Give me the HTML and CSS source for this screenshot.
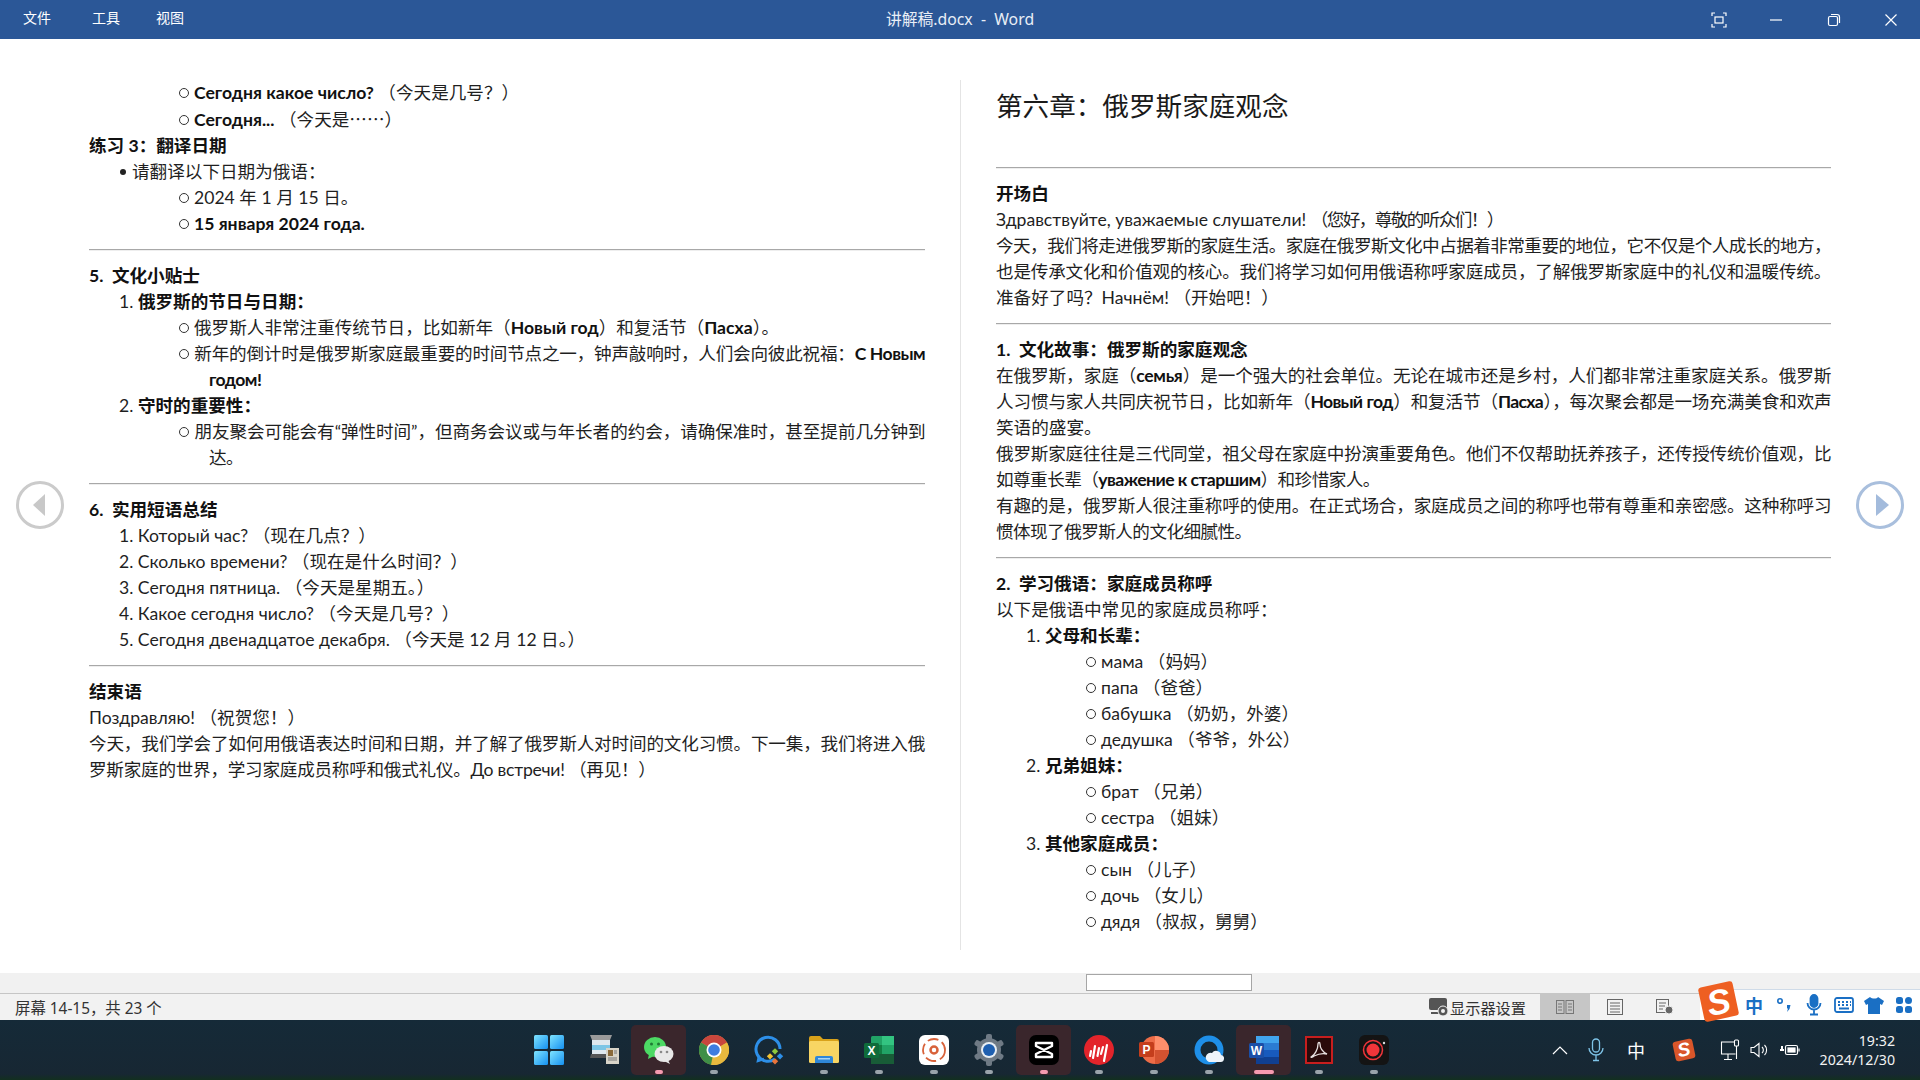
FILE: index.html
```html
<!DOCTYPE html>
<html lang="zh-CN">
<head>
<meta charset="utf-8">
<title>讲解稿.docx - Word</title>
<link rel="stylesheet" href="styles.css">
</head>
<body>
<div class="app">
  <header class="titlebar">
    <nav class="menu"><span class="m1">文件</span><span class="m2">工具</span><span class="m3">视图</span></nav>
    <div class="doc-title">讲解稿.docx&nbsp; - &nbsp;Word</div>
    <div class="winbtns">
      <span class="winbtn"><svg width="16" height="16" viewBox="0 0 16 16" fill="none" stroke="#fff" stroke-width="1.2"><path d="M1 4V1h3M12 1h3v3M15 12v3h-3M4 15H1v-3"/><rect x="4" y="5" width="8" height="6"/></svg></span>
      <span class="winbtn"><svg width="14" height="14" viewBox="0 0 14 14" stroke="#fff" stroke-width="1.2"><path d="M1 7h12"/></svg></span>
      <span class="winbtn"><svg width="14" height="14" viewBox="0 0 14 14" fill="none" stroke="#fff" stroke-width="1.2"><rect x="1.5" y="3.5" width="9" height="9" rx="1.5"/><path d="M4 1.5h6a2.5 2.5 0 0 1 2.500 2.500v6"/></svg></span>
      <span class="winbtn"><svg width="14" height="14" viewBox="0 0 14 14" stroke="#fff" stroke-width="1.2"><path d="M1.500 1.500l11 11M12.500 1.500l-11 11"/></svg></span>
    </div>
  </header>

  <main class="doc">
    <section class="page page-left">
      <p class="l2"><b>Сегодня какое число?</b> （今天是几号？）</p>
      <p class="l2"><b>Сегодня...</b> （今天是<span class="cjk">……</span>）</p>
      <p class="h">练习 3：翻译日期</p>
      <p class="l1 dot">请翻译以下日期为俄语：</p>
      <p class="l2">2024 年 1 月 15 日。</p>
      <p class="l2"><b>15 января 2024 года.</b></p>
      <hr class="rule">
      <p class="h">5. &nbsp;文化小贴士</p>
      <p class="l1">1. <b>俄罗斯的节日与日期：</b></p>
      <p class="l2">俄罗斯人非常注重传统节日，比如新年（<b>Новый год</b>）和复活节（<b>Пасха</b>）。</p>
      <p class="l2 fit">新年的倒计时是俄罗斯家庭最重要的时间节点之一，钟声敲响时，人们会向彼此祝福：<b>С Новым годом!</b></p>
      <p class="l1">2. <b>守时的重要性：</b></p>
      <p class="l2 fit">朋友聚会可能会有“弹性时间”，但商务会议或与年长者的约会，请确保准时，甚至提前几分钟到达。</p>
      <hr class="rule">
      <p class="h">6. &nbsp;实用短语总结</p>
      <p class="l1">1. Который час? （现在几点？）</p>
      <p class="l1">2. Сколько времени? （现在是什么时间？）</p>
      <p class="l1">3. Сегодня пятница. （今天是星期五。）</p>
      <p class="l1">4. Какое сегодня число? （今天是几号？）</p>
      <p class="l1">5. Сегодня двенадцатое декабря. （今天是 12 月 12 日。）</p>
      <hr class="rule">
      <p class="h">结束语</p>
      <p>Поздравляю! （祝贺您！）</p>
      <p class="fit-b">今天，我们学会了如何用俄语表达时间和日期，并了解了俄罗斯人对时间的文化习惯。下一集，我们将进入俄罗斯家庭的世界，学习家庭成员称呼和俄式礼仪。До встречи! （再见！）</p>
    </section>

    <section class="page page-right">
      <h1 class="chapter">第六章：俄罗斯家庭观念</h1>
      <hr class="rule">
      <p class="h">开场白</p>
      <p>Здравствуйте, уважаемые слушатели! <span class="squeeze">（您好，尊敬的听众们！）</span></p>
      <p><span class="ln ln-a">今天，我们将走进俄罗斯的家庭生活。家庭在俄罗斯文化中占据着非常重要的地位，它不仅是个人成长的地方，</span><span class="ln ln-b">也是传承文化和价值观的核心。我们将学习如何用俄语称呼家庭成员，了解俄罗斯家庭中的礼仪和温暖传统。</span>准备好了吗？Начнём! （开始吧！）</p>
      <hr class="rule">
      <p class="h">1. &nbsp;文化故事：俄罗斯的家庭观念</p>
      <p><span class="ln ln-b">在俄罗斯，家庭（<b>семья</b>）是一个强大的社会单位。无论在城市还是乡村，人们都非常注重家庭关系。俄罗斯</span><span class="ln ln-a">人习惯与家人共同庆祝节日，比如新年（<b>Новый год</b>）和复活节（<b>Пасха</b>），每次聚会都是一场充满美食和欢声</span>笑语的盛宴。</p>
      <p class="fit">俄罗斯家庭往往是三代同堂，祖父母在家庭中扮演重要角色。他们不仅帮助抚养孩子，还传授传统价值观，比如尊重长辈（<b>уважение к старшим</b>）和珍惜家人。</p>
      <p class="fit">有趣的是，俄罗斯人很注重称呼的使用。在正式场合，家庭成员之间的称呼也带有尊重和亲密感。这种称呼习惯体现了俄罗斯人的文化细腻性。</p>
      <hr class="rule">
      <p class="h">2. &nbsp;学习俄语：家庭成员称呼</p>
      <p>以下是俄语中常见的家庭成员称呼：</p>
      <p class="l1">1. <b>父母和长辈：</b></p>
      <p class="l2">мама （妈妈）</p>
      <p class="l2">папа （爸爸）</p>
      <p class="l2">бабушка （奶奶，外婆）</p>
      <p class="l2">дедушка （爷爷，外公）</p>
      <p class="l1">2. <b>兄弟姐妹：</b></p>
      <p class="l2">брат （兄弟）</p>
      <p class="l2">сестра （姐妹）</p>
      <p class="l1">3. <b>其他家庭成员：</b></p>
      <p class="l2">сын （儿子）</p>
      <p class="l2">дочь （女儿）</p>
      <p class="l2">дядя （叔叔，舅舅）</p>
    </section>

    <button class="nav nav-prev" aria-label="上一屏"></button>
    <button class="nav nav-next" aria-label="下一屏"></button>
  </main>

  <div class="band"><div class="thumb"></div></div>

  <footer class="status">
    <span class="status-text">屏幕 14-15，共 23 个</span>
    <div class="status-right">
      <span class="display-set">
        <svg width="20" height="20" viewBox="0 0 20 20"><rect x="0" y="1" width="18" height="12" rx="2" fill="#555"/><path d="M2 16h8" stroke="#555" stroke-width="2"/><circle cx="14" cy="14" r="5" fill="#555" stroke="#f1f1f1"/><circle cx="14" cy="14" r="2" fill="#f1f1f1"/></svg>
        显示器设置
      </span>
      <span class="view view-on"><svg width="20" height="16" viewBox="0 0 20 16" fill="none" stroke="#777"><rect x="1.500" y="1.500" width="7.500" height="13"/><rect x="11" y="1.500" width="7.500" height="13"/><path d="M3 5h4M3 8h4M3 11h4M13 5h4M13 8h4M13 11h4"/></svg></span>
      <span class="view"><svg width="20" height="18" viewBox="0 0 20 18" fill="none" stroke="#666"><rect x="2.500" y="1.500" width="15" height="15"/><path d="M5 5h10M5 8h10M5 11h10M5 14h10"/></svg></span>
      <span class="view"><svg width="20" height="18" viewBox="0 0 20 18" fill="none" stroke="#666"><rect x="1.500" y="1.500" width="12" height="13"/><path d="M4 5h7M4 8h6M4 11h4"/><circle cx="14" cy="12" r="4" fill="#666" stroke="#f1f1f1"/></svg></span>
    </div>
  </footer>

  <div class="ime">
    <span class="ime-logo"><span class="ime-s">S</span></span>
    <span class="ime-item ime-zh">中</span>
    <span class="ime-item"><svg width="16" height="16" viewBox="0 0 16 16" fill="#1a6fc4"><circle cx="4" cy="4" r="2.200" fill="none" stroke="#1a6fc4" stroke-width="1.600"/><path d="M11 8h3.500l-1 4-2.500 3 1-3.500H11z"/></svg></span>
    <span class="ime-item"><svg width="16" height="22" viewBox="0 0 16 22" fill="none" stroke="#1a6fc4" stroke-width="1.800"><rect x="4.500" y="1" width="7" height="12" rx="3.500" fill="#1a6fc4"/><path d="M1.500 9a6.500 6.500 0 0 0 13 0M8 15.500V20M4 20.500h8"/></svg></span>
    <span class="ime-item"><svg width="20" height="16" viewBox="0 0 20 16" fill="none" stroke="#1a6fc4" stroke-width="1.800"><rect x="1" y="1" width="18" height="14" rx="2"/><path d="M4 5h2M8 5h2M12 5h2M16 5h1M4 8h2M8 8h2M12 8h2M16 8h1M5 11.500h10"/></svg></span>
    <span class="ime-item"><svg width="20" height="18" viewBox="0 0 20 18" fill="#1a6fc4"><path d="M6 1L0 5l2 4 2-1v10h12V8l2 1 2-4-6-4c-1 2-6 2-8 0z"/></svg></span>
    <span class="ime-item"><svg width="16" height="16" viewBox="0 0 16 16" fill="#1a6fc4"><rect x="0" y="0" width="7" height="7" rx="2.500"/><rect x="9" y="0" width="7" height="7" rx="3.500"/><rect x="0" y="9" width="7" height="7" rx="2.500"/><rect x="9" y="9" width="7" height="7" rx="2.500"/></svg></span>
  </div>

  <div class="taskbar">
    <div class="apps">
      <span class="app-i"><svg width="30" height="30" viewBox="0 0 30 30"><defs><linearGradient id="w" x1="0" y1="0" x2="1" y2="1"><stop offset="0" stop-color="#7fe4ff"/><stop offset="1" stop-color="#1590f0"/></linearGradient></defs><rect width="14" height="14" rx="1.500" fill="url(#w)"/><rect x="16" width="14" height="14" rx="1.500" fill="url(#w)"/><rect y="16" width="14" height="14" rx="1.500" fill="url(#w)"/><rect x="16" y="16" width="14" height="14" rx="1.500" fill="url(#w)"/></svg></span>
      <span class="app-i"><svg width="30" height="30" viewBox="0 0 30 30"><path d="M1 0h22l-2 5H3z" fill="#9a9a9a"/><rect x="3" y="5" width="18" height="14" fill="#dfe8ee"/><rect x="3" y="10" width="18" height="5" fill="#7cc5e5"/><path d="M2 19h20l1 4H1z" fill="#555"/><rect x="17" y="13" width="13" height="16" fill="#d8d4c8"/><rect x="19" y="15" width="5" height="6" fill="#8a6a3a"/><path d="M19 23h9M19 25h9M25 16h3M25 18h3" stroke="#777"/></svg></span>
      <span class="app-i active run-on"><svg width="32" height="28" viewBox="0 0 32 28"><ellipse cx="12" cy="11" rx="11" ry="10" fill="#4cd964"/><path d="M6 18l-1 5 6-3z" fill="#4cd964"/><circle cx="8.500" cy="8" r="1.500" fill="#1e7a34"/><circle cx="15.500" cy="8" r="1.500" fill="#1e7a34"/><ellipse cx="21" cy="18" rx="9.500" ry="8" fill="#e8e8e8"/><path d="M25 24l2 4-6-3z" fill="#e8e8e8"/><circle cx="18" cy="16" r="1.300" fill="#888"/><circle cx="24" cy="16" r="1.300" fill="#888"/></svg></span>
      <span class="app-i run"><svg width="30" height="30" viewBox="0 0 30 30"><circle cx="15" cy="15" r="15" fill="#d9a441"/><path d="M15 15L2 7.500A15 15 0 0 1 28 7.500z" fill="#c9463d"/><path d="M15 15L2 7.500A15 15 0 0 0 15 30z" fill="#3f8f47"/><path d="M15 15L28 7.500A15 15 0 0 1 12 29.700z" fill="#e8b93e"/><circle cx="15" cy="15" r="7.500" fill="#fff"/><circle cx="15" cy="15" r="5.800" fill="#3f7de0"/></svg></span>
      <span class="app-i"><svg width="32" height="30" viewBox="0 0 32 30" fill="none"><path d="M22 24a12 12 0 1 1 5-10" stroke="#2d8fe8" stroke-width="3"/><path d="M6 21l-1 5 6-2" stroke="#2d8fe8" stroke-width="2.500"/><rect x="20" y="14" width="4.500" height="4.500" fill="#8ec83f" transform="rotate(45 22 16)"/><rect x="25" y="19" width="4.500" height="4.500" fill="#2d8fe8" transform="rotate(45 27 21)"/><rect x="15" y="19" width="4.500" height="4.500" fill="#f2c230" transform="rotate(45 17 21)"/><rect x="20" y="24" width="4.500" height="4.500" fill="#e8743b" transform="rotate(45 22 26)"/></svg></span>
      <span class="app-i run"><svg width="30" height="28" viewBox="0 0 30 28"><path d="M0 2a2 2 0 0 1 2-2h9l3 3h14a2 2 0 0 1 2 2v3H0z" fill="#d9a21a"/><rect y="5" width="30" height="22" rx="1.500" fill="#f8d563"/><path d="M6 27v-5a2 2 0 0 1 2-2h14a2 2 0 0 1 2 2v5z" fill="#2f87d8"/><rect x="9" y="22" width="12" height="1.500" fill="#a9d5f5"/></svg></span>
      <span class="app-i run"><svg width="30" height="28" viewBox="0 0 30 28"><rect x="7" width="23" height="28" rx="1.500" fill="#21a366"/><rect x="18" width="12" height="9" fill="#33c481"/><rect x="18" y="9" width="12" height="9" fill="#21a366"/><rect x="7" y="9" width="11" height="9" fill="#107c41"/><rect x="7" y="18" width="23" height="10" fill="#185c37"/><rect y="7" width="15" height="15" rx="1.500" fill="#0f6b3a"/><text class="tile-l" x="7.500" y="19" text-anchor="middle">X</text></svg></span>
      <span class="app-i run"><svg width="30" height="30" viewBox="0 0 30 30" fill="none"><rect width="30" height="30" rx="6" fill="#fff"/><circle cx="15" cy="15" r="3.500" stroke="#d8623a" stroke-width="2.500"/><circle cx="15" cy="15" r="11" stroke="#d8623a" stroke-width="1.800" stroke-dasharray="11 4"/></svg></span>
      <span class="app-i run"><svg width="32" height="32" viewBox="0 0 32 32"><g fill="#6f7a85"><circle cx="16" cy="16" r="12"/><rect x="13" y="0" width="6" height="32" rx="2"/><rect x="13" y="0" width="6" height="32" rx="2" transform="rotate(60 16 16)"/><rect x="13" y="0" width="6" height="32" rx="2" transform="rotate(120 16 16)"/></g><circle cx="16" cy="16" r="8" fill="#e8eef4"/><circle cx="16" cy="16" r="6" fill="#1e5fb0"/></svg></span>
      <span class="app-i active run-on"><svg width="30" height="30" viewBox="0 0 30 30" fill="none"><rect width="30" height="30" rx="7" fill="#000"/><path d="M7 8h16v3L7 19v3h16v-3L7 11z" stroke="#fff" stroke-width="2.400" stroke-linejoin="round"/></svg></span>
      <span class="app-i run"><svg width="30" height="30" viewBox="0 0 30 30" fill="none"><circle cx="15" cy="15" r="15" fill="#e3242b"/><path d="M7 16l-1 5M11 11l-2 12M15 13l-1.500 8M19 12l-2 7M23 10l-3 16" stroke="#fff" stroke-width="2.200" stroke-linecap="round"/></svg></span>
      <span class="app-i run"><svg width="30" height="30" viewBox="0 0 30 30"><circle cx="16" cy="15" r="14" fill="#ed6c47"/><path d="M16 1a14 14 0 0 1 14 14H16z" fill="#ff8f6b"/><path d="M16 15h14a14 14 0 0 1-14 14z" fill="#d35230"/><rect y="7" width="15" height="15" rx="1.500" fill="#c43e1c"/><text class="tile-l" x="7.500" y="19" text-anchor="middle">P</text></svg></span>
      <span class="app-i run"><svg width="30" height="30" viewBox="0 0 30 30" fill="none"><circle cx="15" cy="15" r="11.500" stroke="#1e8fe8" stroke-width="6"/><path d="M15 27h11a3.500 3.500 0 0 0 1-7 5 5 0 0 0-9-2 4.500 4.500 0 0 0-3 9z" fill="#eef4fa"/></svg></span>
      <span class="app-i active run-wide"><svg width="30" height="28" viewBox="0 0 30 28"><rect x="7" width="23" height="28" rx="1.500" fill="#2b7cd3"/><rect x="7" width="23" height="7" fill="#41a5ee"/><rect x="7" y="14" width="23" height="7" fill="#185abd"/><rect x="7" y="21" width="23" height="7" fill="#103f91"/><rect y="7" width="15" height="15" rx="1.500" fill="#1a4fa8"/><text class="tile-l" x="7.500" y="19" text-anchor="middle">W</text></svg></span>
      <span class="app-i run"><svg width="28" height="28" viewBox="0 0 28 28" fill="none"><rect x="1" y="1" width="26" height="26" fill="#2a0a0a" stroke="#c81e1e" stroke-width="2"/><path d="M6 21c4-2 7-8 7-13 0-2 2-2 2 0 0 4 3 8 7 10-4-1-9 0-13 2-1 1-3 2-3 1z" stroke="#e8e0e0" stroke-width="1.300"/></svg></span>
      <span class="app-i run"><svg width="30" height="30" viewBox="0 0 30 30" fill="none"><rect width="30" height="30" rx="6" fill="#141414"/><circle cx="14" cy="15" r="6.500" fill="#f0353a"/><circle cx="14" cy="15" r="9.500" stroke="#f0353a" stroke-width="1.500"/><circle cx="25" cy="8" r="1.200" fill="#ddd"/></svg></span>
    </div>

    <div class="tray">
      <span class="tr tr-up"><svg width="16" height="10" viewBox="0 0 16 10" fill="none" stroke="#fff" stroke-width="1.200"><path d="M1 9l7-7 7 7"/></svg></span>
      <span class="tr tr-mic"><svg width="16" height="24" viewBox="0 0 16 24" fill="none" stroke="#7fc4e8" stroke-width="1.300"><rect x="4.500" y="1" width="7" height="13" rx="3.500"/><path d="M1 10a7 7 0 0 0 14 0M8 17v5M5 22.500h6"/></svg></span>
      <span class="tr tr-zh">中</span>
      <span class="tr tr-s"><span class="s-small">S</span></span>
      <span class="tr tr-mon"><svg width="20" height="22" viewBox="0 0 20 22" fill="none" stroke="#fff" stroke-width="1.100"><path d="M14 3H1.500v12h14"/><path d="M8 15v5M4 20.500h8"/><rect x="14.500" y="1" width="4" height="6" rx="1"/><path d="M16.500 7v13"/></svg></span>
      <span class="tr tr-vol"><svg width="20" height="16" viewBox="0 0 20 16" fill="none" stroke="#fff" stroke-width="1.100"><path d="M1 5.500h3L9 1.500v13L4 10.500H1z"/><path d="M12 5a4 4 0 0 1 0 6M14.500 3a7 7 0 0 1 0 10"/></svg></span>
      <span class="tr tr-bat"><svg width="20" height="16" viewBox="0 0 20 16" fill="none" stroke="#fff" stroke-width="1.200"><rect x="5.500" y="3.500" width="12" height="9" rx="1.500"/><path d="M19 6.500v3"/><rect x="8" y="6" width="7" height="4" fill="#fff"/><path d="M0 8h4M2 4v4" stroke-width="2"/></svg></span>
      <div class="clock"><div>19:32</div><div>2024/12/30</div></div>
    </div>
  </div>
</div>
</body>
</html>
```

FILE: styles.css
```css
* { box-sizing: border-box; }
html, body { margin: 0; padding: 0; }
body {
  width: 1920px;
  height: 1080px;
  overflow: hidden;
  font-family: "Noto Sans", "Noto Sans CJK SC", sans-serif;
  color: #222;
}
.app { position: relative; display: flex; flex-direction: column; height: 1080px; background: #fff; }

/* title bar */
.titlebar {
  position: relative;
  height: 39px;
  flex: none;
  background: #2b5797;
  color: #fff;
  font-size: 14px;
  display: flex;
  align-items: center;
}
.menu { display: flex; padding-left: 23px; margin-top: -6px; }
.m1 { width: 69px; }
.m2 { width: 64px; }
.m3 { width: 40px; }
.doc-title {
  position: absolute;
  left: 0;
  right: 0;
  top: 8px;
  text-align: center;
  font-size: 15.800px;
  line-height: 22px;
  color: #e8eef6;
}
.winbtns { margin-left: auto; display: flex; }
.winbtn { width: 57.500px; height: 39px; display: flex; align-items: center; justify-content: center; }

/* document */
.doc { position: relative; flex: 1; display: flex; padding-top: 41px; }
.page {
  width: 960px;
  height: 870px;
  font-family: Lato, "Noto Sans CJK SC", sans-serif;
  font-size: 17.6px;
  line-height: 26px;
  color: #1f1f1f;
}
.page-left { padding: 0 35px 0 89px; }
.page-right { padding: 0 89px 0 35px; border-left: 1px solid #e4e4e4; }
.page p { margin: 0; text-align: justify; }
.page b { font-weight: 700; color: #111; }
.page .fit { letter-spacing: -0.55px; }
.page .fit-b { letter-spacing: -0.25px; }
.ln { display: block; text-align-last: justify; }
.ln-a { letter-spacing: -0.7px; }
.ln-b { letter-spacing: -0.3px; }
.squeeze { letter-spacing: -1.600px; }
.cjk { font-family: "Noto Sans CJK SC", sans-serif; }
.h { font-weight: 700; color: #111; }
.chapter { margin: 0 0 34px; height: 53px; font-size: 26.600px; line-height: 53px; font-weight: 400; color: #1a1a1a; }
.rule { height: 2px; margin: 12px 0; border: 0; border-top: 1px solid #a8a8a8; border-bottom: 1px solid #eee; }
.l1 { padding-left: 30px; }
.l1.dot::before { content: ""; display: inline-block; width: 6px; height: 6px; border-radius: 50%; background: #222; margin: 0 6px 3px 1px; }
.l2 { padding-left: 120px; text-indent: -30px; }
.l2::before { content: ""; display: inline-block; width: 8px; height: 8px; border: 1px solid #333; border-radius: 50%; margin-right: 5px; margin-bottom: 1px; }

.nav { position: absolute; top: 442px; width: 48px; height: 48px; padding: 0; border-radius: 50%; background: #fff; border: 3px solid #cbcbcb; }
.nav::after { content: ""; position: absolute; top: 10px; border: 11px solid transparent; }
.nav-prev { left: 16px; }
.nav-prev::after { border-left-width: 0; border-right: 12px solid #c8c8c8; left: 14px; }
.nav-next { left: 1856px; border-color: #a9bfdd; }
.nav-next::after { left: 17px; border-right-width: 0; border-left: 13px solid #a3bbdc; }

/* band + status */
.band { height: 20px; flex: none; background: #f1f1f1; padding: 1px 0 0 1086px; }
.thumb { width: 166px; height: 17px; background: #fff; border: 1px solid #a6a6a6; }
.status {
  height: 27px;
  flex: none;
  background: #f2f2f2;
  border-top: 1px solid #c6c6c6;
  display: flex;
  align-items: center;
  font-size: 15.400px;
  color: #333;
}
.status-text { padding-left: 15px; }
.status-right { margin-left: auto; display: flex; align-items: center; height: 100%; padding-right: 230px; }
.display-set { display: flex; align-items: center; gap: 1px; font-size: 15.200px; width: 111px; }
.view { width: 50px; height: 100%; display: flex; align-items: center; justify-content: center; }
.view-on { background: #c6c6c6; }

/* IME */
.ime {
  position: absolute;
  left: 1700px;
  top: 989px;
  width: 220px;
  height: 31px;
  background: #fff;
  border-top: 1px solid #cfdbe8;
  display: flex;
  align-items: center;
  padding-left: 39px;
}
.ime-logo {
  position: absolute;
  left: 1px;
  top: -6px;
  width: 35px;
  height: 35px;
  background: #ee5f22;
  border-radius: 3px;
  transform: rotate(-12deg);
  display: flex;
  align-items: center;
  justify-content: center;
}
.ime-s { font: italic 700 35px/35px "Liberation Sans", sans-serif; color: #fff; }
.ime-item { width: 30px; display: flex; justify-content: center; align-items: center; }
.ime-zh { font-size: 18px; font-weight: 700; color: #1a6fc4; }

/* taskbar */
.taskbar {
  height: 60px;
  flex: none;
  background: linear-gradient(180deg, #152a38 0, #172733 90%, #12301f 100%);
  display: flex;
  align-items: center;
  color: #fff;
}
.apps { display: flex; padding-left: 521px; }
.app-i { position: relative; width: 55px; height: 50px; display: flex; align-items: center; justify-content: center; border-radius: 5px; }
.active { background: #3a262c; }
.run::after, .run-on::after, .run-wide::after {
  content: "";
  position: absolute;
  bottom: 1px;
  left: 50%;
  width: 8px;
  height: 4px;
  margin-left: -4px;
  border-radius: 2px;
  background: #9aa3ab;
}
.run-on::after, .run-wide::after { background: #f59ab0; }
.run-wide::after { width: 20px; margin-left: -10px; }
.tile-l { font: 700 12px "Liberation Sans", sans-serif; fill: #fff; }

.tray { margin-left: auto; display: flex; align-items: center; height: 100%; }
.tr { display: flex; align-items: center; justify-content: center; }
.tr-up { width: 36px; }
.tr-mic { width: 36px; }
.tr-zh { width: 44px; font-size: 18px; }
.tr-s { width: 52px; }
.s-small { width: 20px; height: 20px; background: #d9562a; border-radius: 3px; transform: rotate(-12deg); font: italic 700 19px/20px "Liberation Sans", sans-serif; text-align: center; color: #fff; }
.tr-mon { width: 40px; }
.tr-vol { width: 20px; }
.tr-bat { width: 40px; }
.clock { width: 110px; padding-right: 25px; text-align: right; font-size: 14.200px; line-height: 19px; color: #f2f2f2; }
```
